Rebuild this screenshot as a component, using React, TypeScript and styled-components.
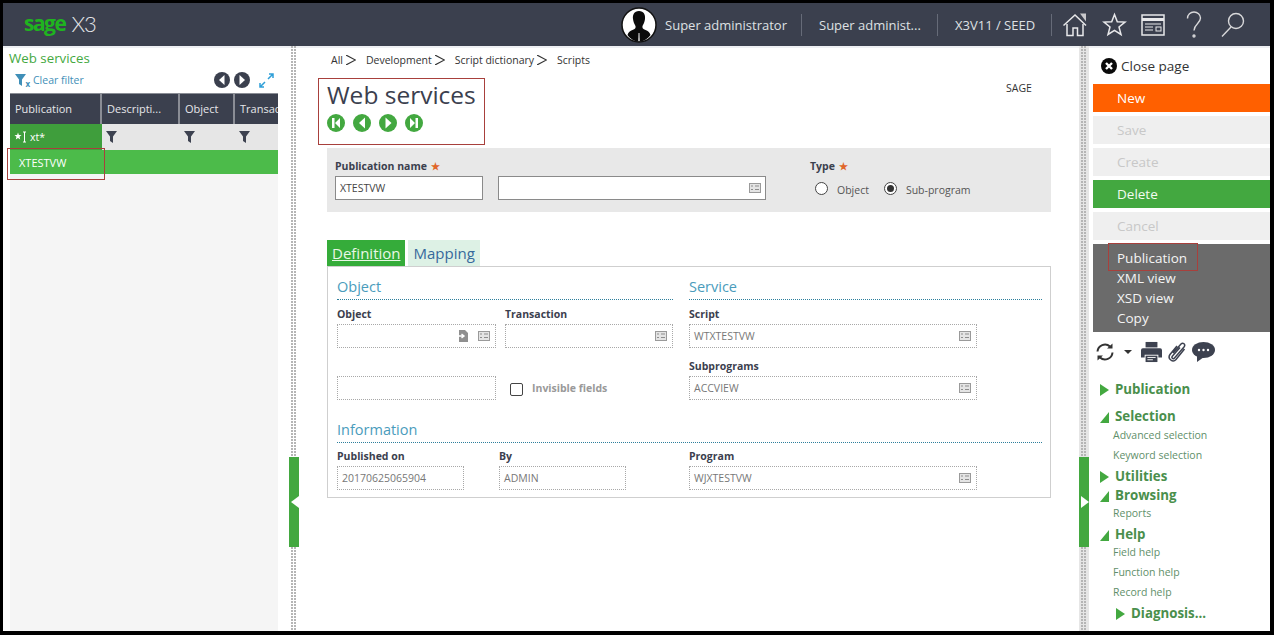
import React from 'react';
import styled, { createGlobalStyle } from 'styled-components';

const GlobalStyle = createGlobalStyle`
  html, body { margin: 0; padding: 0; background: #000; }
  * { box-sizing: border-box; }
  body { font-family: "Open Sans", "Noto Sans", "Liberation Sans", sans-serif; }
`;

const green = '#43a840';

const FieldIcon: React.FC = () => (
  <svg width="12" height="10" viewBox="0 0 12 10">
    <rect x="0.5" y="0.5" width="11" height="9" fill="#e4e4e4" stroke="#9a9a9a" />
    <path d="M2 3h2M6 3h4M2 6.500h2M6 6.500h4" stroke="#8d8d8d" strokeWidth="1" />
  </svg>
);

const PickIcon: React.FC = () => (
  <svg width="11" height="12" viewBox="0 0 11 12">
    <path d="M1 0h6l3 3v9H1z" fill="#8f8f8f" />
    <path d="M0 6h5M3.500 4l2.500 2-2.500 2" stroke="#fff" strokeWidth="1.400" fill="none" />
  </svg>
);

const Funnel: React.FC<{ color?: string }> = ({ color = '#3d4250' }) => (
  <svg width="11" height="12" viewBox="0 0 11 12">
    <path d="M0 0h11L7 5.500V12L4 10V5.500z" fill={color} />
  </svg>
);

const SearchAllIcon: React.FC = () => (
  <svg width="13" height="12" viewBox="0 0 13 12" fill="none">
    <path d="M4 1.500l.9 2.500 2.600.1-2 1.700.7 2.600L4 7 1.800 8.400l.7-2.600-2-1.700 2.600-.1z" fill="#fff" />
    <path d="M9 1h3M10.500 1v10M9 11h3" stroke="#fff" />
  </svg>
);

const NavIcon: React.FC<{ kind: 'first' | 'prev' | 'next' | 'last' }> = ({ kind }) => (
  <svg width="18" height="18" viewBox="0 0 18 18">
    <circle cx="9" cy="9" r="9" fill={green} />
    {kind === 'first' && <path d="M5 4h2.500v10H5zM13 4v10L8 9z" fill="#fff" />}
    {kind === 'prev' && <path d="M12 3.500v11L6 9z" fill="#fff" />}
    {kind === 'next' && <path d="M6.500 3.500v11L12.500 9z" fill="#fff" />}
    {kind === 'last' && <path d="M10.500 4H13v10h-2.500zM5 4v10l5-5z" fill="#fff" />}
  </svg>
);

const PagerIcon: React.FC<{ dir: 'left' | 'right' }> = ({ dir }) => (
  <svg width="16" height="16" viewBox="0 0 16 16">
    <circle cx="8" cy="8" r="8" fill="#3b404e" />
    <path d={dir === 'left' ? 'M10.500 3v10L5 8z' : 'M5.500 3v10L11 8z'} fill="#fff" />
  </svg>
);

const Avatar: React.FC = () => (
  <svg width="36" height="36" viewBox="0 0 36 36">
    <circle cx="18" cy="18" r="17" fill="#fff" stroke="#111" strokeWidth="1.500" />
    <path
      d="M18 4c-5 0-6.500 4-6 8 .3 3 1.500 5 2.500 7 .5 2-.5 3-3 4-2.500 1-4 2-5 5 3 4 7 6.500 10.500 6.500h2c3.500 0 7.500-2.500 10.500-6.500-1-3-2.500-4-5-5-2.500-1-3.500-2-3-4 1-2 2.200-4 2.500-7 .5-4-1-8-6-8z"
      fill="#0b0b0b"
    />
    <path d="M17.500 26h1l.3 8h-1.600z" fill="#ddd" />
  </svg>
);

const HomeIcon: React.FC = () => (
  <svg width="26" height="26" viewBox="0 0 26 26" fill="none" stroke="#e8e8ea" strokeWidth="1.500">
    <path d="M1.500 13.500 13 3l11 10.500" />
    <path d="M5 12v11.500h6V16h4.500v7.500H21V12" />
    <path d="M18 1.500h6v8z" fill="#c9c9cc" stroke="none" />
  </svg>
);

const StarIcon: React.FC = () => (
  <svg width="25" height="25" viewBox="0 0 25 25" fill="none" stroke="#e8e8ea" strokeWidth="1.500">
    <path d="M12.500 2.500l2.800 7.200 7.700.4-6 4.900 2 7.500-6.500-4.200L6 22.500l2-7.500-6-4.900 7.700-.4z" />
  </svg>
);

const DashIcon: React.FC = () => (
  <svg width="24" height="22" viewBox="0 0 24 22" fill="none" stroke="#e8e8ea">
    <rect x="1" y="1" width="22" height="20" strokeWidth="1.500" />
    <path d="M1 5.500h22" strokeWidth="3" />
    <path d="M4 10h16M4 13h8M4 16h8" />
    <rect x="15" y="13" width="5" height="4" />
  </svg>
);

const HelpIcon: React.FC = () => (
  <svg width="16" height="28" viewBox="0 0 16 28" fill="none" stroke="#d8d8da" strokeWidth="1.400">
    <path d="M1.500 7.500C1.500 3.500 4.500 1 8 1s6.500 2.500 6.500 6c0 5.500-6.500 6-6.500 12.500" />
    <circle cx="8" cy="25" r="1" />
  </svg>
);

const SearchIcon: React.FC = () => (
  <svg width="26" height="26" viewBox="0 0 26 26" fill="none" stroke="#d8d8da" strokeWidth="1.400">
    <circle cx="16" cy="9" r="7.500" />
    <path d="M11 15 2 24.500" />
  </svg>
);

const CloseIcon: React.FC = () => (
  <svg width="16" height="16" viewBox="0 0 16 16">
    <circle cx="8" cy="8" r="8" fill="#0a0a0a" />
    <path d="M5 5l6 6M11 5l-6 6" stroke="#fff" strokeWidth="2.400" />
  </svg>
);

const RefreshIcon: React.FC = () => (
  <svg width="20" height="20" viewBox="0 0 20 20" fill="none" stroke="#333" strokeWidth="2">
    <path d="M2.500 9.500A7.500 7.500 0 0 1 15 4.500M17.500 10.500A7.500 7.500 0 0 1 5 15.500" />
    <path d="M12 6.500h5.500V1.500zM8 13.500H2.500v5z" fill="#333" stroke="none" />
  </svg>
);

const PrintIcon: React.FC = () => (
  <svg width="21" height="22" viewBox="0 0 23 22">
    <path d="M5 0h13v6H5z" fill="#3d4250" />
    <path d="M2 7h19a2 2 0 0 1 2 2v8h-4v-3H4v3H0V9a2 2 0 0 1 2-2z" fill="#3d4250" />
    <path d="M5 15h13v7H5z" fill="#3d4250" />
    <path d="M7 17h9M7 19.500h6" stroke="#fff" strokeWidth="1" />
  </svg>
);

const ClipIcon: React.FC = () => (
  <svg width="20" height="22" viewBox="0 0 20 22" fill="none" stroke="#3d4250" strokeWidth="1.500">
    <path d="M6 12 14 3c2-2 5 .5 3 3L7.500 17c-1.500 1.700-3.500-.3-2-2L13 6.500M17.500 8 9 18.500c-3 3.500-9-.5-6-5L10 5" />
  </svg>
);

const ChatIcon: React.FC = () => (
  <svg width="23" height="20" viewBox="0 0 23 20">
    <ellipse cx="11.500" cy="8" rx="11.500" ry="8" fill="#3d4250" />
    <path d="M5 13v7l7-5z" fill="#3d4250" />
    <circle cx="7" cy="8" r="1.200" fill="#fff" />
    <circle cx="11.500" cy="8" r="1.200" fill="#fff" />
    <circle cx="16" cy="8" r="1.200" fill="#fff" />
  </svg>
);

const Frame = styled.div`
  width: 1274px;
  height: 635px;
  background: #fff;
  border-style: solid;
  border-color: #000;
  border-width: 3px 4px 4px 3px;
  display: flex;
  flex-direction: column;
  overflow: hidden;
`;

const TopBar = styled.header`
  height: 43px;
  flex: none;
  background: #3b404e;
  box-shadow: 0 2px 0 #eef0f3;
  display: flex;
  align-items: center;
  padding: 0 24px 0 21px;
  color: #dfe0e3;
  font-size: 13px;
`;

const Logo = styled.div`
  display: flex;
  align-items: center;
  gap: 6px;
  margin-top: -3px;
`;

const LogoSage = styled.span`
  color: #1fb41f;
  font-weight: 700;
  font-size: 21px;
  letter-spacing: -1.500px;
`;

const LogoProduct = styled.span`
  color: #e4e5e8;
  font-family: "Lato", sans-serif;
  font-weight: 300;
  font-size: 22px;
  letter-spacing: -1px;
`;

const TopRight = styled.div`
  margin-left: auto;
  display: flex;
  align-items: center;
`;

const UserName = styled.span`
  margin: 0 14px 0 8px;
`;

const TopCell = styled.span<{ $width: number }>`
  width: ${p => p.$width}px;
  height: 22px;
  line-height: 22px;
  border-left: 1px solid #666b78;
  padding-left: 17px;
  white-space: nowrap;
`;

const TopIcons = styled.div`
  display: flex;
  align-items: center;
  gap: 14px;
  border-left: 1px solid #666b78;
  padding-left: 10px;
  height: 22px;
`;

const HelpSlot = styled.span`
  display: flex;
  margin: 0 4px 0 7px;
`;

const Body = styled.div`
  flex: 1;
  min-height: 0;
  display: flex;
`;

const LeftPanel = styled.aside`
  width: 286px;
  flex: none;
  padding: 4px 11px 0 7px;
  display: flex;
  flex-direction: column;
`;

const PanelTitle = styled.div`
  color: ${green};
  font-size: 13.300px;
  height: 20px;
  line-height: 16px;
  margin-left: -1px;
`;

const FilterBar = styled.div`
  height: 23px;
  display: flex;
  align-items: center;
  padding: 0 4px 3px 5px;
  gap: 3px;
  color: #3f8fb8;
  font-size: 10.500px;
`;

const FilterIconWrap = styled.span`
  display: flex;
  position: relative;
  width: 15px;
`;

const FilterX = styled.span`
  position: absolute;
  right: 0;
  bottom: -2px;
  font-size: 8px;
  line-height: 8px;
  font-weight: 700;
`;

const PagerButtons = styled.div`
  margin-left: auto;
  display: flex;
  align-items: center;
  gap: 4px;
`;

const Expand = styled.span`
  display: flex;
  margin-left: 5px;
`;

const Grid = styled.div`
  flex: 1;
  background: #f5f5f5;
`;

const GridRow = styled.div<{ $h: number; $bg: string }>`
  display: grid;
  grid-template-columns: 92px 78px 55px 1fr;
  height: ${p => p.$h}px;
  background: ${p => p.$bg};
  position: relative;
`;

const HeadCell = styled.div`
  background: #3b404e;
  color: #e6e7ea;
  font-size: 11px;
  display: flex;
  align-items: center;
  padding: 0 0 2px 5px;
  border-right: 2px solid #8a8d95;
  border-top: 1px solid #8a8d95;
  white-space: nowrap;
  overflow: hidden;
  &:last-child { border-right: none; }
`;

const FilterCell = styled.div`
  display: flex;
  align-items: center;
  padding-left: 4px;
`;

const FilterInput = styled.div`
  background: #3f9e3c;
  color: #fff;
  font-size: 10.500px;
  display: flex;
  align-items: center;
  gap: 3px;
  padding-left: 4px;
`;

const DataCell = styled.div`
  color: #fff;
  font-size: 11px;
  display: flex;
  align-items: center;
  padding-left: 9px;
`;

const Marker = styled.div`
  position: absolute;
  border: 1px solid #a8403c;
  pointer-events: none;
`;

const RowMarker = styled(Marker)`
  left: -3px;
  top: -2px;
  width: 98px;
  height: 32px;
`;

const Splitter = styled.div<{ $shade?: boolean }>`
  width: 10px;
  flex: none;
  position: relative;
  display: flex;
  justify-content: center;
  background: ${p => (p.$shade ? '#e6e6e6' : 'transparent')};
`;

const Dots = styled.div`
  width: 6px;
  height: 100%;
  background-image: radial-gradient(circle at 1px 1px, #b5b5b5 1px, transparent 1px);
  background-size: 3px 3px;
`;

const Handle = styled.div`
  position: absolute;
  left: 0;
  top: 411px;
  width: 10px;
  height: 90px;
  background: ${green};
  display: flex;
  align-items: center;
`;

const HandleArrow = styled.span<{ $right?: boolean }>`
  width: 0;
  height: 0;
  margin-left: 2px;
  border-top: 6px solid transparent;
  border-bottom: 6px solid transparent;
  ${p => (p.$right ? 'border-left: 8px solid #fff;' : 'border-right: 8px solid #fff;')}
`;

const Center = styled.main`
  flex: 1;
  min-width: 0;
  padding: 7px 28px 0 28px;
  position: relative;
`;

const Crumbs = styled.div`
  display: flex;
  height: 14px;
  align-items: center;
  padding-left: 4px;
  font-size: 10.500px;
  color: #333;
  gap: 10px;
`;

const Crumb = styled.span`
  display: flex;
  align-items: center;
  gap: 3px;
`;

const CrumbArrow = styled.svg`
  width: 10px;
  height: 10px;
`;

const TitleBox = styled.div`
  width: 167px;
  height: 67px;
  margin: 11px 0 3px -9px;
  border: 1px solid #a8403c;
  padding: 0 0 0 8px;
`;

const PageTitle = styled.h1`
  margin: 0;
  font-weight: 400;
  font-size: 24.500px;
  line-height: 31px;
  color: #3b404e;
  white-space: nowrap;
`;

const NavRow = styled.div`
  display: flex;
  gap: 8px;
  margin-top: 4px;
`;

const Owner = styled.div`
  position: absolute;
  top: 35px;
  left: 707px;
  font-size: 10.500px;
  color: #333;
`;

const HeaderBlock = styled.section`
  background: #e8e8e8;
  height: 64px;
  display: flex;
  padding: 10px 0 0 8px;
`;

const FieldCol = styled.div<{ $w: number; $gap?: number }>`
  width: ${p => p.$w}px;
  margin-right: ${p => p.$gap ?? 0}px;
  flex: none;
`;

const FieldLabel = styled.div<{ $muted?: boolean }>`
  height: 18px;
  line-height: 16px;
  font-size: 10.500px;
  font-weight: 700;
  color: ${p => (p.$muted ? '#999' : '#3b404e')};
  white-space: nowrap;
`;

const Required = styled.span`
  color: #e0662a;
  margin-left: 4px;
  font-size: 10px;
  line-height: 10px;
`;

const TextInput = styled.div<{ $w?: number }>`
  width: ${p => (p.$w ? `${p.$w}px` : '100%')};
  height: 24px;
  background: #fff;
  border: 1px solid #8a8a8a;
  display: flex;
  align-items: center;
  justify-content: flex-end;
  gap: 9px;
  padding: 0 4px;
  font-size: 10.500px;
  color: #444;
`;

const InputValue = styled.span`
  margin-right: auto;
`;

const ReadField = styled(TextInput)`
  border: 1px dotted #a8a8a8;
  color: #777;
  padding-right: 5px;
`;

const RadioRow = styled.div`
  display: flex;
  align-items: center;
  height: 24px;
  padding: 1px 0 0 5px;
  font-size: 10.500px;
  color: #555;
`;

const Radio = styled.span<{ $on?: boolean; $gap: number }>`
  width: 13px;
  height: 13px;
  border: 1px solid #444;
  border-radius: 50%;
  background: #fff;
  margin-right: ${p => p.$gap}px;
  display: flex;
  align-items: center;
  justify-content: center;
  &::after {
    content: '';
    width: 7px;
    height: 7px;
    border-radius: 50%;
    background: ${p => (p.$on ? '#333' : 'transparent')};
  }
`;

const RadioText = styled.span`
  margin: 2px 15px 0 0;
`;

const Tabs = styled.div`
  display: flex;
  gap: 3px;
  margin-top: 28px;
  height: 26px;
`;

const Tab = styled.div<{ $active?: boolean }>`
  padding: 0 5px;
  font-size: 15px;
  line-height: 26px;
  background: ${p => (p.$active ? '#35ac3a' : '#ddf1e5')};
  color: ${p => (p.$active ? '#e9f7e6' : '#37699c')};
  text-decoration: ${p => (p.$active ? 'underline' : 'none')};
`;

const TabBody = styled.section`
  border: 1px solid #cfcfcf;
  height: 232px;
  padding: 10px 8px 0 9px;
`;

const Columns = styled.div`
  display: grid;
  grid-template-columns: 336px 353px;
  column-gap: 16px;
  height: 143px;
`;

const SectionTitle = styled.div`
  color: #4a9cbc;
  font-size: 14.500px;
  line-height: 19px;
  height: 23px;
  border-bottom: 1px dotted #2d7f9c;
  margin-bottom: 6px;
`;

const FieldGrid = styled.div`
  display: grid;
  grid-template-columns: 159px 168px;
  column-gap: 9px;
  row-gap: 10px;
`;

const EmptyLabel = styled.div`
  height: 18px;
`;

const CheckRow = styled.div`
  display: flex;
  align-items: center;
  padding: 4px 0 0 5px;
  gap: 9px;
`;

const CheckBox = styled.span`
  width: 13px;
  height: 13px;
  border: 1px solid #444;
  border-radius: 2px;
  background: #fff;
`;

const ServiceFields = styled.div`
  display: flex;
  flex-direction: column;
  gap: 10px;
  width: 288px;
`;

const InfoRow = styled.div`
  display: flex;
  margin-top: -1px;
`;

const RightPanel = styled.aside`
  width: 181px;
  flex: none;
  padding-left: 4px;
`;

const ClosePage = styled.div`
  height: 38px;
  display: flex;
  align-items: center;
  gap: 4px;
  padding: 2px 0 0 8px;
  font-size: 13.500px;
  color: #333;
`;

const ActionList = styled.div`
  display: flex;
  flex-direction: column;
  gap: 4px;
`;

const ActionButton = styled.div<{ $bg: string; $fg: string }>`
  height: 28px;
  line-height: 28px;
  padding-left: 24px;
  font-size: 13.500px;
  background: ${p => p.$bg};
  color: ${p => p.$fg};
`;

const MoreBlock = styled.div`
  background: #6b6b6b;
  height: 88px;
  padding: 4px 0 0 24px;
  color: #f4f4f4;
  font-size: 13.500px;
  line-height: 20px;
  position: relative;
`;

const PublicationMarker = styled(Marker)`
  left: 15px;
  top: -1px;
  width: 90px;
  height: 28px;
`;

const ToolRow = styled.div`
  display: flex;
  align-items: center;
  height: 40px;
  padding: 0 0 0 2px;
`;

const Caret = styled.span`
  width: 0;
  height: 0;
  border-left: 4px solid transparent;
  border-right: 4px solid transparent;
  border-top: 4px solid #333;
  margin: 0 9px 0 9px;
`;

const ToolIcons = styled.div`
  display: flex;
  align-items: center;
  gap: 5px;
`;

const Tree = styled.nav`
  padding: 7px 0 0 7px;
  color: #4a8f4c;
`;

const TreeHead = styled.div<{ $after?: number; $indent?: number }>`
  display: flex;
  align-items: center;
  height: 19px;
  margin-bottom: ${p => p.$after ?? 0}px;
  padding-left: ${p => p.$indent ?? 0}px;
  font-size: 13.300px;
  font-weight: 700;
`;

const Arrow = styled.svg`
  width: 9px;
  height: 12px;
  margin: 2px 6px 0 0;
  flex: none;
`;

const TreeLink = styled.div`
  height: 20px;
  line-height: 18px;
  padding-left: 13px;
  font-size: 10.500px;
  color: #5f8f6a;
`;

const Closed: React.FC = () => (
  <Arrow viewBox="0 0 9 12"><path d="M0 0l9 6-9 6z" fill={green} /></Arrow>
);

const Opened: React.FC = () => (
  <Arrow viewBox="0 0 9 12"><path d="M9 1v11H0z" fill={green} /></Arrow>
);

const Chevron: React.FC = () => (
  <CrumbArrow viewBox="0 0 9 9"><path d="M0 0l8.500 4.500L0 9" fill="none" stroke="#333" /></CrumbArrow>
);

const crumbs = ['All', 'Development', 'Script dictionary'];

const App: React.FC = () => (
  <Frame>
    <GlobalStyle />
    <TopBar>
      <Logo>
        <LogoSage>sage</LogoSage>
        <LogoProduct>X3</LogoProduct>
      </Logo>
      <TopRight>
        <Avatar />
        <UserName>Super administrator</UserName>
        <TopCell $width={136}>Super administ...</TopCell>
        <TopCell $width={114}>X3V11 / SEED</TopCell>
        <TopIcons>
          <HomeIcon />
          <StarIcon />
          <DashIcon />
          <HelpSlot><HelpIcon /></HelpSlot>
          <SearchIcon />
        </TopIcons>
      </TopRight>
    </TopBar>
    <Body>
      <LeftPanel>
        <PanelTitle>Web services</PanelTitle>
        <FilterBar>
          <FilterIconWrap>
            <Funnel color="#3f8fb8" />
            <FilterX>x</FilterX>
          </FilterIconWrap>
          Clear filter
          <PagerButtons>
            <PagerIcon dir="left" />
            <PagerIcon dir="right" />
            <Expand>
              <svg width="15" height="15" viewBox="0 0 15 15" fill="none" stroke="#2f9fd8" strokeWidth="1.500">
                <path d="M9 6l5-5M10 1h4v4M6 9l-5 5M1 10v4h4" />
              </svg>
            </Expand>
          </PagerButtons>
        </FilterBar>
        <Grid>
          <GridRow $h={31} $bg="#3b404e">
            <HeadCell>Publication</HeadCell>
            <HeadCell>Descripti...</HeadCell>
            <HeadCell>Object</HeadCell>
            <HeadCell>Transaction</HeadCell>
          </GridRow>
          <GridRow $h={26} $bg="#e6e6e6">
            <FilterInput><SearchAllIcon />xt*</FilterInput>
            <FilterCell><Funnel /></FilterCell>
            <FilterCell><Funnel /></FilterCell>
            <FilterCell><Funnel /></FilterCell>
          </GridRow>
          <GridRow $h={24} $bg="#4cbb4a">
            <DataCell>XTESTVW</DataCell>
            <RowMarker />
          </GridRow>
        </Grid>
      </LeftPanel>
      <Splitter>
        <Dots />
        <Handle><HandleArrow /></Handle>
      </Splitter>
      <Center>
        <Crumbs>
          {crumbs.map(c => (
            <Crumb key={c}>{c}<Chevron /></Crumb>
          ))}
          <Crumb>Scripts</Crumb>
        </Crumbs>
        <TitleBox>
          <PageTitle>Web services</PageTitle>
          <NavRow>
            <NavIcon kind="first" />
            <NavIcon kind="prev" />
            <NavIcon kind="next" />
            <NavIcon kind="last" />
          </NavRow>
        </TitleBox>
        <Owner>SAGE</Owner>
        <HeaderBlock>
          <FieldCol $w={148} $gap={15}>
            <FieldLabel>Publication name<Required>★</Required></FieldLabel>
            <TextInput><InputValue>XTESTVW</InputValue></TextInput>
          </FieldCol>
          <FieldCol $w={268} $gap={44}>
            <EmptyLabel />
            <TextInput><FieldIcon /></TextInput>
          </FieldCol>
          <FieldCol $w={200}>
            <FieldLabel>Type<Required>★</Required></FieldLabel>
            <RadioRow>
              <Radio $gap={9} />
              <RadioText>Object</RadioText>
              <Radio $on $gap={9} />
              <RadioText>Sub-program</RadioText>
            </RadioRow>
          </FieldCol>
        </HeaderBlock>
        <Tabs>
          <Tab $active>Definition</Tab>
          <Tab>Mapping</Tab>
        </Tabs>
        <TabBody>
          <Columns>
            <div>
              <SectionTitle>Object</SectionTitle>
              <FieldGrid>
                <div>
                  <FieldLabel>Object</FieldLabel>
                  <ReadField><PickIcon /><FieldIcon /></ReadField>
                </div>
                <div>
                  <FieldLabel>Transaction</FieldLabel>
                  <ReadField><FieldIcon /></ReadField>
                </div>
                <div>
                  <EmptyLabel />
                  <ReadField />
                </div>
                <div>
                  <EmptyLabel />
                  <CheckRow>
                    <CheckBox />
                    <FieldLabel $muted>Invisible fields</FieldLabel>
                  </CheckRow>
                </div>
              </FieldGrid>
            </div>
            <div>
              <SectionTitle>Service</SectionTitle>
              <ServiceFields>
                <div>
                  <FieldLabel>Script</FieldLabel>
                  <ReadField><InputValue>WTXTESTVW</InputValue><FieldIcon /></ReadField>
                </div>
                <div>
                  <FieldLabel>Subprograms</FieldLabel>
                  <ReadField><InputValue>ACCVIEW</InputValue><FieldIcon /></ReadField>
                </div>
              </ServiceFields>
            </div>
          </Columns>
          <SectionTitle>Information</SectionTitle>
          <InfoRow>
            <FieldCol $w={127} $gap={35}>
              <FieldLabel>Published on</FieldLabel>
              <ReadField><InputValue>20170625065904</InputValue></ReadField>
            </FieldCol>
            <FieldCol $w={127} $gap={63}>
              <FieldLabel>By</FieldLabel>
              <ReadField><InputValue>ADMIN</InputValue></ReadField>
            </FieldCol>
            <FieldCol $w={288}>
              <FieldLabel>Program</FieldLabel>
              <ReadField><InputValue>WJXTESTVW</InputValue><FieldIcon /></ReadField>
            </FieldCol>
          </InfoRow>
        </TabBody>
      </Center>
      <Splitter $shade>
        <Dots />
        <Handle><HandleArrow $right /></Handle>
      </Splitter>
      <RightPanel>
        <ClosePage><CloseIcon />Close page</ClosePage>
        <ActionList>
          <ActionButton $bg="#ff6000" $fg="#fff">New</ActionButton>
          <ActionButton $bg="#efefef" $fg="#c8c8c8">Save</ActionButton>
          <ActionButton $bg="#efefef" $fg="#c8c8c8">Create</ActionButton>
          <ActionButton $bg={green} $fg="#f2fbf0">Delete</ActionButton>
          <ActionButton $bg="#efefef" $fg="#c8c8c8">Cancel</ActionButton>
          <MoreBlock>
            <PublicationMarker />
            <div>Publication</div>
            <div>XML view</div>
            <div>XSD view</div>
            <div>Copy</div>
          </MoreBlock>
        </ActionList>
        <ToolRow>
          <RefreshIcon />
          <Caret />
          <ToolIcons>
            <PrintIcon />
            <ClipIcon />
            <ChatIcon />
          </ToolIcons>
        </ToolRow>
        <Tree>
          <TreeHead $after={8}><Closed />Publication</TreeHead>
          <TreeHead $after={1}><Opened />Selection</TreeHead>
          <TreeLink>Advanced selection</TreeLink>
          <TreeLink>Keyword selection</TreeLink>
          <TreeHead><Closed />Utilities</TreeHead>
          <TreeHead><Opened />Browsing</TreeHead>
          <TreeLink>Reports</TreeLink>
          <TreeHead><Opened />Help</TreeHead>
          <TreeLink>Field help</TreeLink>
          <TreeLink>Function help</TreeLink>
          <TreeLink>Record help</TreeLink>
          <TreeHead $indent={16}><Closed />Diagnosis...</TreeHead>
        </Tree>
      </RightPanel>
    </Body>
  </Frame>
);

export default App;
